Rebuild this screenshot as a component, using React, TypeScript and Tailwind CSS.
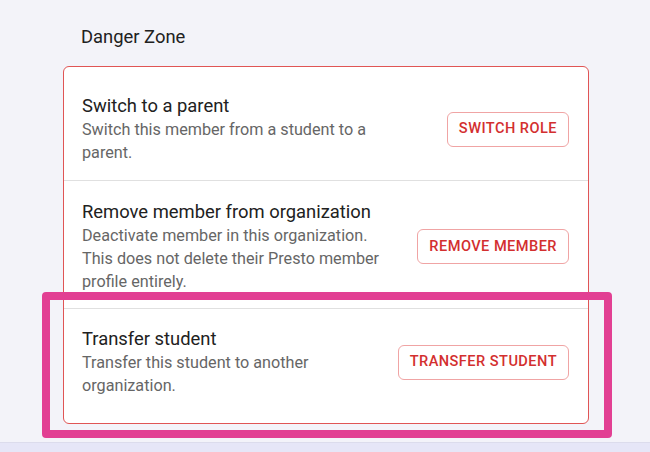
import React from "react";

const rows = [
  {
    title: "Switch to a parent",
    desc: "Switch this member from a student to a parent.",
    button: "Switch role",
    pad: "pt-[27px] pb-[16px]",
  },
  {
    title: "Remove member from organization",
    desc: "Deactivate member in this organization. This does not delete their Presto member profile entirely.",
    button: "Remove member",
    pad: "pt-[19px] pb-[15px]",
  },
  {
    title: "Transfer student",
    desc: "Transfer this student to another organization.",
    button: "Transfer student",
    pad: "pt-[18px] pb-[26px]",
  },
];

export default function App() {
  return (
    <div
      className="relative flex h-[452px] w-[650px] flex-col overflow-hidden bg-[#f3f3f9]"
      style={{ fontFamily: "Roboto, 'Liberation Sans', sans-serif" }}
    >
      <div className="flex-1 pl-[63px] pr-[61px]">
        <div className="pl-[18px] pt-[25px] text-[18.4px] leading-[24px] text-[#212121]">Danger Zone</div>
        <div className="mt-[17px] rounded-md border border-[#e05555] bg-white">
          {rows.map((r, i) => (
            <div
              key={r.title}
              className={`flex items-center gap-6 pl-[18px] pr-[19px] ${r.pad} ${i > 0 ? "border-t border-[#e0e0e0]" : ""}`}
            >
              <div className="max-w-[320px] flex-1">
                <div className="text-[18.4px] leading-[24px] text-[#212121]">{r.title}</div>
                <div className="text-[16.2px] leading-[23px] text-[#666666]">{r.desc}</div>
              </div>
              <button className="ml-auto h-[35px] shrink-0 rounded-md border border-[#f0a4a4] px-[11px] text-[14.6px] font-medium uppercase tracking-[0.45px] text-[#d32f2f]">
                {r.button}
              </button>
            </div>
          ))}
        </div>
      </div>
      <div className="h-[10px] border-t border-[#dcdcec] bg-[#e6e6f7]" />
      <div className="absolute left-[42px] top-[292px] h-[146px] w-[570px] rounded-[4px] border-8 border-[#e23f93]" />
    </div>
  );
}
